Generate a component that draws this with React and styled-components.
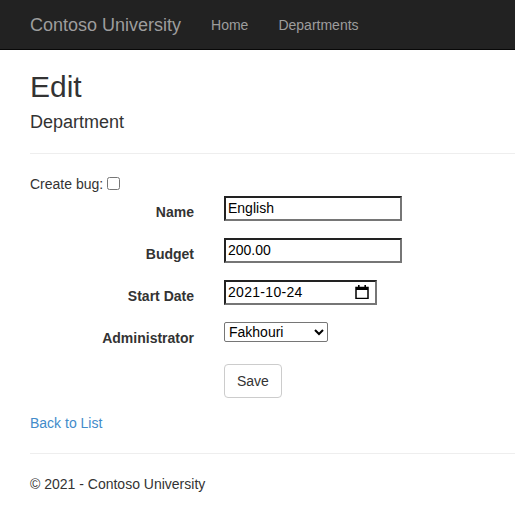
import React, { useState } from "react";
import styled, { createGlobalStyle } from "styled-components";

const GlobalStyle = createGlobalStyle`
  html, body {
    margin: 0;
    padding: 0;
    background: #fff;
  }
  body {
    font-family: "Liberation Sans", Arial, sans-serif;
    font-size: 14px;
    line-height: 20px;
    color: #333;
    overflow: hidden;
  }
  * {
    box-sizing: border-box;
  }
`;

const Navbar = styled.nav`
  display: flex;
  align-items: flex-start;
  height: 50px;
  padding: 0 15px;
  background: #222;
  border-bottom: 1px solid #080808;
`;

const Brand = styled.a`
  padding: 15px;
  font-size: 18px;
  line-height: 20px;
  color: #9d9d9d;
  text-decoration: none;
`;

const NavLink = styled.a`
  padding: 15px;
  font-size: 14px;
  line-height: 20px;
  color: #9d9d9d;
  text-decoration: none;
`;

const Main = styled.main`
  padding-left: 30px;
`;

const Title = styled.h2`
  margin: 20px 0 0;
  font-size: 30px;
  font-weight: 500;
  line-height: 33px;
`;

const Subtitle = styled.h4`
  margin: 10px 0 0;
  font-size: 18px;
  font-weight: 500;
  line-height: 19.8px;
`;

const Rule = styled.hr`
  margin: ${(p) => p.$top || 20}px 0 20px;
  border: 0;
  border-top: 1px solid #eee;
  height: 0;
`;

const BugLine = styled.div`
  display: flex;
  align-items: center;
  height: 20px;
  margin-bottom: 1px;
`;

const Checkbox = styled.input`
  width: 13px;
  height: 13px;
  margin: 3px 3px 3px 4px;
`;

const Form = styled.form`
  display: flex;
  flex-direction: column;
  gap: 15px;
`;

const Row = styled.div`
  display: grid;
  grid-template-columns: 164px 1fr;
  column-gap: 30px;
  align-items: start;
`;

const Label = styled.label`
  padding-top: 7px;
  text-align: right;
  font-weight: bold;
  line-height: 20px;
`;

const Field = styled.div`
  padding-top: 1px;
  display: flex;
`;

const TextInput = styled.input`
  width: ${(p) => p.$width}px;
  height: 25px;
  padding: 1px 2px;
  font-family: "Liberation Sans", Arial, sans-serif;
  font-size: 14px;
  color: #000;
  border-width: 2px;
  border-style: solid;
  border-color: #222 #767676 #767676 #222;
  outline: none;
`;

const DateBox = styled.div`
  display: flex;
  align-items: center;
  width: 153px;
  height: 25px;
  padding: 0 6px 0 2px;
  border-width: 2px;
  border-style: solid;
  border-color: #222 #767676 #767676 #222;
`;

const DateText = styled.input`
  flex: 1;
  min-width: 0;
  border: none;
  padding: 0;
  outline: none;
  font-family: "Liberation Sans", Arial, sans-serif;
  font-size: 14px;
  letter-spacing: 0.3px;
  color: #000;
`;

const Select = styled.select`
  width: 104px;
  height: 20px;
  font-family: "Liberation Sans", Arial, sans-serif;
  font-size: 14px;
  color: #000;
  border: 1px solid #767676;
  border-radius: 2px;
  background: #fff;
`;

const Button = styled.button`
  padding: 6px 12px;
  font-family: "Liberation Sans", Arial, sans-serif;
  font-size: 14px;
  line-height: 20px;
  color: #333;
  background: #fff;
  border: 1px solid #ccc;
  border-radius: 4px;
`;

const BackLink = styled.a`
  display: block;
  margin-top: 15px;
  color: #428bca;
  text-decoration: none;
`;

const Footer = styled.footer`
  line-height: 20px;
`;

const CalendarIcon = () => (
  <svg width="14" height="14" viewBox="0 0 14 14">
    <rect x="1" y="2.5" width="12" height="11" fill="none" stroke="#000" strokeWidth="1.5" />
    <rect x="1" y="2" width="12" height="3" fill="#000" />
    <rect x="3" y="0" width="1.6" height="3" fill="#000" />
    <rect x="9.4" y="0" width="1.6" height="3" fill="#000" />
  </svg>
);

const App = () => {
  const [name, setName] = useState("English");
  const [budget, setBudget] = useState("200.00");
  const [date, setDate] = useState("2021-10-24");

  return (
    <>
      <GlobalStyle />
      <Navbar>
        <Brand href="#">Contoso University</Brand>
        <NavLink href="#">Home</NavLink>
        <NavLink href="#">Departments</NavLink>
      </Navbar>
      <Main>
        <Title>Edit</Title>
        <Subtitle>Department</Subtitle>
        <Rule />
        <BugLine>
          Create bug: <Checkbox type="checkbox" />
        </BugLine>
        <Form onSubmit={(e) => e.preventDefault()}>
          <Row>
            <Label>Name</Label>
            <Field>
              <TextInput $width={178} value={name} onChange={(e) => setName(e.target.value)} />
            </Field>
          </Row>
          <Row>
            <Label>Budget</Label>
            <Field>
              <TextInput $width={178} value={budget} onChange={(e) => setBudget(e.target.value)} />
            </Field>
          </Row>
          <Row>
            <Label>Start Date</Label>
            <Field>
              <DateBox>
                <DateText value={date} onChange={(e) => setDate(e.target.value)} />
                <CalendarIcon />
              </DateBox>
            </Field>
          </Row>
          <Row>
            <Label>Administrator</Label>
            <Field>
              <Select defaultValue="Fakhouri">
                <option>Abercrombie</option>
                <option>Fakhouri</option>
                <option>Harui</option>
                <option>Kapoor</option>
              </Select>
            </Field>
          </Row>
          <Row>
            <span />
            <Field>
              <Button type="submit">Save</Button>
            </Field>
          </Row>
        </Form>
        <BackLink href="#">Back to List</BackLink>
        <Rule />
        <Footer>© 2021 - Contoso University</Footer>
      </Main>
    </>
  );
};

export default App;
